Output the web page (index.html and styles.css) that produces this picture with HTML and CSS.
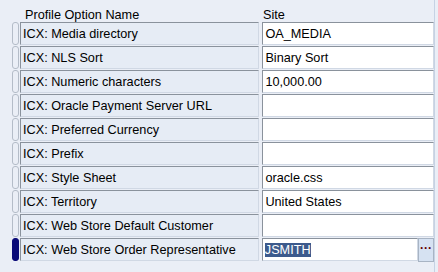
FILE: index.html
```html
<!DOCTYPE html>
<html>
<head>
    <title>Profile Options</title>
    <link rel="stylesheet" href="styles.css">
</head>
<body>
    <div class="grid">
        <div class="head">
            <span class="head-name">Profile Option Name</span>
            <span class="head-site">Site</span>
        </div>

        <div class="row">
            <span class="marker"></span>
            <span class="name">ICX: Media directory</span>
            <span class="site">OA_MEDIA</span>
        </div>
        <div class="row">
            <span class="marker"></span>
            <span class="name">ICX: NLS Sort</span>
            <span class="site">Binary Sort</span>
        </div>
        <div class="row">
            <span class="marker"></span>
            <span class="name">ICX: Numeric characters</span>
            <span class="site">10,000.00</span>
        </div>
        <div class="row">
            <span class="marker"></span>
            <span class="name">ICX: Oracle Payment Server URL</span>
            <span class="site"></span>
        </div>
        <div class="row">
            <span class="marker"></span>
            <span class="name">ICX: Preferred Currency</span>
            <span class="site"></span>
        </div>
        <div class="row">
            <span class="marker"></span>
            <span class="name">ICX: Prefix</span>
            <span class="site"></span>
        </div>
        <div class="row">
            <span class="marker"></span>
            <span class="name">ICX: Style Sheet</span>
            <span class="site">oracle.css</span>
        </div>
        <div class="row">
            <span class="marker"></span>
            <span class="name">ICX: Territory</span>
            <span class="site">United States</span>
        </div>
        <div class="row">
            <span class="marker"></span>
            <span class="name">ICX: Web Store Default Customer</span>
            <span class="site"></span>
        </div>
        <div class="row current">
            <span class="marker"></span>
            <span class="name">ICX: Web Store Order Representative</span>
            <span class="site"><span class="selected">JSMITH</span></span>
            <span class="lov">&middot;&middot;&middot;</span>
        </div>
    </div>
</body>
</html>
```

FILE: styles.css
```css
body {
    margin: 0;
    width: 438px;
    height: 272px;
    background-color: #eaeef6;
    font-family: "Liberation Sans", Arial, sans-serif;
    font-size: 12.7px;
    color: #000;
    overflow: hidden;
}

.grid {
    padding: 3px 0 0 12px;
    border-right: 1px solid #c6d2e4;
    width: 422px;
    height: 269px;
}

.head {
    display: flex;
    height: 19px;
    align-items: flex-end;
}

.head-name {
    width: 251px;
    padding-left: 13px;
    box-sizing: border-box;
}

.row {
    display: flex;
    height: 24px;
    align-items: flex-start;
}

.marker {
    width: 5px;
    height: 21px;
    border: 1px solid #b4bcc8;
    border-radius: 3px;
    background-color: #eaeef6;
    margin-right: 1px;
}

.current .marker {
    background-color: #0a0a78;
    border-color: #0a0a78;
}

.name, .site {
    height: 21px;
    line-height: 22px;
    padding-left: 2px;
    border: 1px solid;
    border-color: #8a929c #d0d8e4 #d0d8e4 #8a929c;
    white-space: nowrap;
    overflow: hidden;
}

.name {
    width: 236px;
    background-color: #e6ecf5;
    margin-right: 3px;
}

.site {
    width: 168px;
    background-color: #fff;
}

.current .site {
    width: 153px;
}

.selected {
    background-color: #3c5a8c;
    color: #fff;
}

.lov {
    width: 14px;
    height: 22px;
    line-height: 19px;
    text-align: center;
    font-weight: bold;
    color: #600;
    background-color: #d6e2f2;
    border: 1px solid #a8b4c4;
    font-size: 12px;
}
```
